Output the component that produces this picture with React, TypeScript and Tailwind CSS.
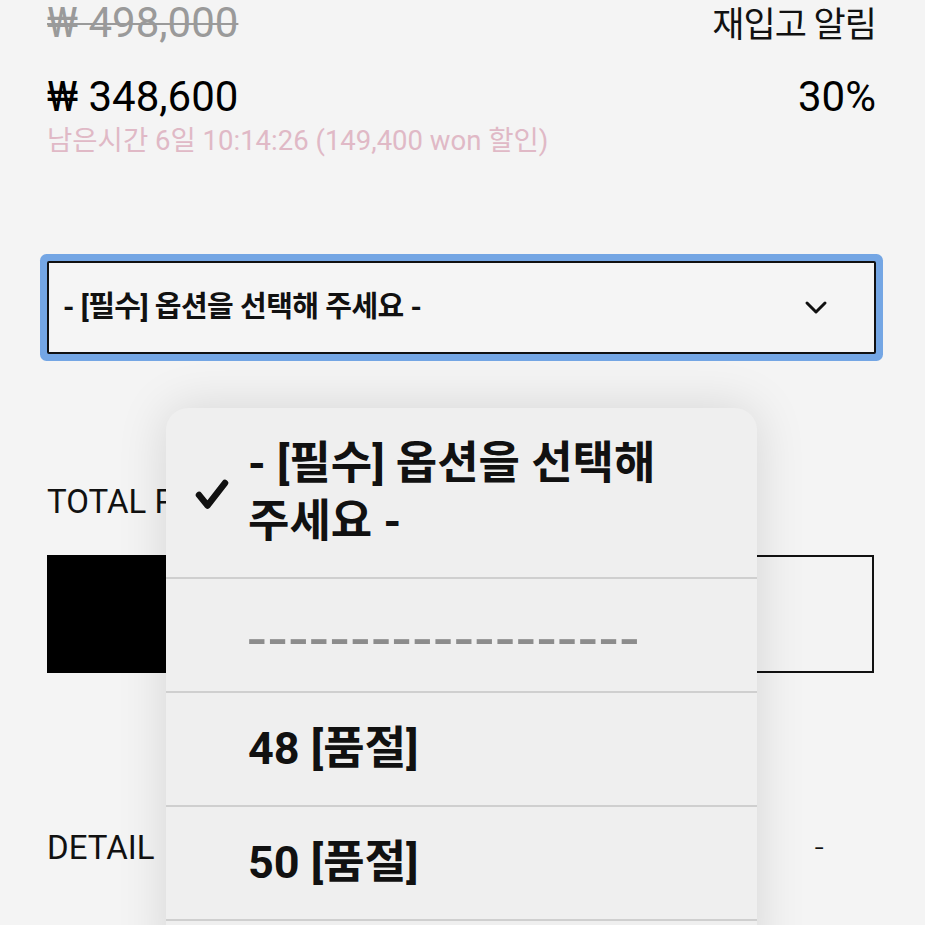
import React from "react";

function Check() {
  return (
    <svg width="36" height="33" viewBox="0 0 36 33" fill="none">
      <path d="M5 17 L13.5 27.5 L31 5" stroke="#111" strokeWidth="6.5" strokeLinecap="round" strokeLinejoin="round" />
    </svg>
  );
}

function Chevron() {
  return (
    <svg width="24" height="16" viewBox="0 0 24 16" fill="none">
      <path d="M3 3 L12 12 L21 3" stroke="#111" strokeWidth="3" strokeLinecap="round" strokeLinejoin="round" />
    </svg>
  );
}

export default function App() {
  return (
    <div className="relative h-[925px] w-[925px] overflow-hidden bg-[#f4f4f4] font-[Roboto,'Noto_Sans_CJK_KR',sans-serif] text-[#111]">
      <div className="pl-[47px] pr-[49px]">
        <div className="flex items-baseline justify-between pt-[2px] leading-[42px]">
          <span className="text-[42px] text-[#9a9a9a] line-through decoration-[2px]">₩ 498,000</span>
          <span className="text-[35px] tracking-[-1px]">재입고 알림</span>
        </div>
        <div className="mt-[29px] flex items-baseline justify-between leading-[42px]">
          <span className="text-[42px] text-black">₩ 348,600</span>
          <span className="text-[42px] text-black">30%</span>
        </div>
        <div className="mt-[7px] text-[27.5px] leading-[32px] text-[#e0b9c6]">
          남은시간 6일 10:14:26 (149,400 won 할인)
        </div>

        <div className="mt-[104px] flex h-[93px] items-center justify-between rounded-[2px] border-2 border-[#111] bg-[#f5f5f5] pl-[14px] pr-[46px] shadow-[0_0_0_7px_#74a6e4]">
          <span className="text-[29px] font-bold tracking-[-0.5px]">- [필수] 옵션을 선택해 주세요 -</span>
          <Chevron />
        </div>

        <div className="mt-[128px] text-[33px] leading-[40px]">TOTAL PRICE</div>

        <div className="mt-[33px] mr-[2px] flex h-[118px] gap-[16px]">
          <div className="w-[420px] bg-black" />
          <div className="flex-1 border-2 border-[#111] bg-[#f3f3f3]" />
        </div>

        <div className="mt-[155px] flex items-baseline justify-between text-[33px] leading-[40px]">
          <span>DETAIL</span>
          <span className="mr-[52px] font-light">-</span>
        </div>
      </div>

      <div className="absolute left-[166px] top-[408px] h-[560px] w-[591px] overflow-hidden rounded-t-[22px] bg-[#efefef] font-bold shadow-[0_0_50px_rgba(0,0,0,0.13)]">
        <div className="flex h-[171px] items-center border-b-2 border-[#cfcfcf]">
          <div className="w-[82px] pl-[28px] pt-[4px]">
            <Check />
          </div>
          <div className="w-[410px] text-[45px] leading-[58px]">- [필수] 옵션을 선택해 주세요 -</div>
        </div>
        <div className="flex h-[114px] items-center border-b-2 border-[#cfcfcf] pl-[82px]">
          <span className="pt-[10px] text-[64px] font-normal leading-none tracking-[3px] text-[#8c8c8c]">-------------------</span>
        </div>
        <div className="flex h-[114px] items-center border-b-2 border-[#cfcfcf] pl-[82px]">
          <span className="text-[45px] leading-[50px]">48 [품절]</span>
        </div>
        <div className="flex h-[114px] items-center border-b-2 border-[#cfcfcf] pl-[82px]">
          <span className="text-[45px] leading-[50px]">50 [품절]</span>
        </div>
        <div className="h-[114px]" />
      </div>
    </div>
  );
}
